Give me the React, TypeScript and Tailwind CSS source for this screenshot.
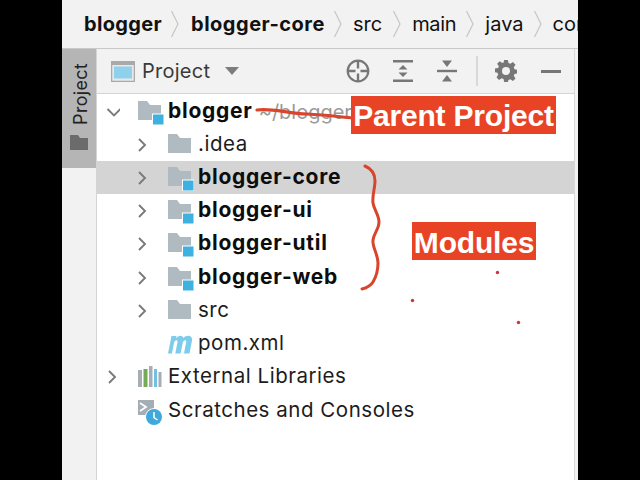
import React from "react";

const F = "font-['Inter','Liberation_Sans',sans-serif]";

function Folder({ module }: { module?: boolean }) {
  return (
    <svg width="26" height="26" viewBox="0 0 26 26" className="shrink-0">
      <path d="M0 2h9l3 4h11v15H0z" fill="#afbac1" />
      {module && <rect x="14" y="14.5" width="12" height="11.5" fill="#fff" />}
      {module && <rect x="15" y="15.5" width="10.500" height="10" fill="#3fb1e0" />}
    </svg>
  );
}

function Chevron({ open }: { open?: boolean }) {
  return (
    <svg width="16" height="16" viewBox="0 0 16 16" className="shrink-0">
      <path
        d={open ? "M3.500 5l6.500 6.500 6.500-6.500" : "M5 2l6 6-6 6"}
        fill="none"
        stroke="#777b7e"
        strokeWidth="1.9"
      />
    </svg>
  );
}

function Sep() {
  return (
    <svg width="10" height="28" viewBox="0 0 10 28" className="shrink-0">
      <path d="M1.5 1l6.5 13-6.5 13" fill="none" stroke="#c6c6c6" strokeWidth="1.2" />
    </svg>
  );
}

function Row({
  pad,
  arrow,
  icon,
  text,
  bold,
  selected,
  children,
  h = "h-[33px]",
}: {
  pad: string;
  arrow?: "open" | "closed";
  icon: React.ReactNode;
  text: string;
  bold?: boolean;
  selected?: boolean;
  children?: React.ReactNode;
  h?: string;
}) {
  return (
    <div className={`flex items-center ${h} ${pad} ${selected ? "bg-[#d4d4d4]" : ""}`}>
      <div className="w-[34px] shrink-0 flex overflow-visible">
        {arrow && <Chevron open={arrow === "open"} />}
      </div>
      <div className="w-[30px] shrink-0 flex">{icon}</div>
      <span
        className={`leading-none whitespace-nowrap ${
          bold
            ? "text-[21px] font-bold text-[#0d0d0d] tracking-[0.75px] -mt-[3px]"
            : "text-[20.5px] text-[#1c1c1c] tracking-[0.53px]"
        }`}
      >
        {text}
      </span>
      {children}
    </div>
  );
}

export default function App() {
  return (
    <div className={`w-[640px] h-[480px] bg-black flex justify-center overflow-hidden ${F}`}>
      <div className="w-[516px] h-[480px] relative flex flex-col bg-white overflow-hidden">
        {/* Breadcrumb */}
        <div className="h-[49px] shrink-0 bg-[#f2f2f2] border-b border-[#c8c8c8] flex items-center pl-[22px] text-[20px] text-[#111] whitespace-nowrap overflow-hidden">
          <span className="font-bold tracking-[0.35px]">blogger</span>
          <span className="ml-[8px] mr-[11px] flex"><Sep /></span>
          <span className="font-bold tracking-[0.5px]">blogger-core</span>
          <span className="ml-[8px] mr-[10px] flex"><Sep /></span>
          <span>src</span>
          <span className="ml-[10px] mr-[10px] flex"><Sep /></span>
          <span className="tracking-[-0.3px]">main</span>
          <span className="ml-[9px] mr-[10px] flex"><Sep /></span>
          <span>java</span>
          <span className="ml-[9px] mr-[10px] flex"><Sep /></span>
          <span>com</span>
        </div>

        <div className="flex-1 flex min-h-0">
          {/* Left strip */}
          <div className="w-[35px] shrink-0 bg-[#f2f2f2] border-r border-[#d4d4d4]">
            <div className="h-[119px] w-[34px] bg-[#b5b5b5] flex flex-col items-center justify-end pb-[18px] gap-[10px]">
              <span className="[writing-mode:vertical-rl] rotate-180 translate-x-[2px] text-[18px] leading-none text-[#222] tracking-[0.3px]">
                Project
              </span>
              <svg width="18" height="15" viewBox="0 0 18 15">
                <path d="M0 0h8l2 3h8v12H0z" fill="#6b6b6b" />
              </svg>
            </div>
          </div>

          {/* Main panel */}
          <div className="flex-1 flex flex-col min-w-0">
            <div className="h-[45px] shrink-0 bg-[#f2f2f2] border-b border-[#d4d4d4] flex items-center pl-[14px] relative">
              <svg width="24" height="21" viewBox="0 0 24 21" className="shrink-0">
                <rect x="0.5" y="0.5" width="23" height="20" fill="#e8e8e8" stroke="#a9a9a9" strokeWidth="1.5" />
                <rect x="0" y="0" width="24" height="4" fill="#a9a9a9" />
                <rect x="3" y="5.5" width="18" height="12" fill="#8fd0ec" />
              </svg>
              <span className="ml-[7px] text-[20px] text-[#3a3a3a] tracking-[0.25px]">Project</span>
              <svg width="14" height="8" viewBox="0 0 14 8" className="ml-[15px] shrink-0">
                <path d="M0 0h14l-7 8z" fill="#7d7d7d" />
              </svg>
              <div className="ml-auto flex items-center pr-[13px]">
                <svg width="24" height="24" viewBox="0 0 24 24" className="shrink-0">
                  <circle cx="12" cy="12" r="10.3" fill="none" stroke="#777" strokeWidth="2.2" />
                  <path d="M12 2v7.5M12 14.5V22M2 12h7.5M14.5 12H22" stroke="#777" strokeWidth="2.4" />
                </svg>
                <svg width="20" height="24" viewBox="0 0 20 24" className="ml-[23px] shrink-0">
                  <path d="M0 1h20v2.5H0zM0 20.5h20V23H0z" fill="#777" />
                  <path d="M10 6l4.5 4.5h-9zM10 18l-4.5-4.5h9z" fill="#777" />
                </svg>
                <svg width="20" height="24" viewBox="0 0 20 24" className="ml-[24px] shrink-0">
                  <path d="M0 10.8h20v2.4H0z" fill="#777" />
                  <path d="M5 1.500h10L10 8zM10 16l5 6.500H5z" fill="#777" />
                </svg>
                <div className="w-[2px] h-[30px] bg-[#d8d8d8] ml-[19px]" />
                <svg width="22" height="22" viewBox="0 0 24 24" className="ml-[17px] shrink-0">
                  <path
                    fill="#777"
                    fillRule="evenodd"
                    d="M10 0h4l.7 3.400 2 .8L19.600 2.300l2.800 2.800-1.900 2.900.8 2 3.400.700v3.900l-3.400.7-.8 2 1.900 2.900-2.800 2.800-2.900-1.900-2 .8L14 24h-4l-.7-3.400-2-.8-2.900 1.900-2.800-2.800 1.900-2.900-.8-2L0 13.300V9.400l3.400-.7.8-2L2.300 4.100 5.100 1.300 8 3.200l1.300-.5zM12 7.500a4.400 4.400 0 1 0 0 8.800 4.400 4.400 0 0 0 0-8.800z"
                  />
                </svg>
                <div className="w-[20px] h-[3px] bg-[#777] ml-[24px]" />
              </div>
            </div>

            <div className="flex-1 flex flex-col pt-[1px]">
              <Row pad="pl-[7px]" arrow="open" bold text="blogger" icon={<Folder module />}>
                <span className="ml-[6px] text-[20px] text-[#9a9a9a] whitespace-nowrap">~/blogger</span>
              </Row>
              <Row pad="pl-[37px]" arrow="closed" text=".idea" icon={<Folder />} />
              <Row pad="pl-[37px]" arrow="closed" bold selected text="blogger-core" icon={<Folder module />} />
              <Row pad="pl-[37px]" arrow="closed" bold text="blogger-ui" icon={<Folder module />} />
              <Row pad="pl-[37px]" arrow="closed" bold text="blogger-util" icon={<Folder module />} h="h-[34px]" />
              <Row pad="pl-[37px]" arrow="closed" bold text="blogger-web" icon={<Folder module />} />
              <Row pad="pl-[37px]" arrow="closed" text="src" icon={<Folder />} />
              <Row
                pad="pl-[37px]"
                text="pom.xml"
                icon={
                  <svg width="25" height="22" viewBox="0 0 25 22">
                    <path
                      d="M0 20.500L3.500 3h5l-.5 2.500C10 2.500 14 1.500 15.500 5 18 1.500 25 1.500 24 7.500l-2.500 13h-5.500l2.200-11.500c.4-2.400-2.200-2.400-3.400.5l-2.200 11h-5.300l2.200-11.500c.4-2.400-2.200-2.400-3.400.5l-2.200 11z"
                      fill="#7ccdec"
                    />
                  </svg>
                }
              />
              <Row
                pad="pl-[7px]"
                arrow="closed"
                text="External Libraries"
                icon={
                  <svg width="26" height="22" viewBox="0 0 26 22">
                    <rect x="0" y="4" width="4" height="17" fill="#a5aeb4" />
                    <rect x="5.500" y="3" width="4" height="18" fill="#74a957" />
                    <rect x="11" y="0" width="3.500" height="21" fill="#a5aeb4" />
                    <rect x="16" y="3" width="3" height="18" fill="#6fc0e5" />
                    <rect x="20.500" y="6" width="3" height="15" fill="#a5aeb4" />
                  </svg>
                }
              />
              <Row
                pad="pl-[7px]"
                text="Scratches and Consoles"
                h="h-[34px]"
                icon={
                  <svg width="26" height="26" viewBox="0 0 26 26" className="mt-[5px]">
                    <rect x="0" y="0" width="16" height="15" fill="#a5aeb4" />
                    <path d="M2 3l6 4-6 4" fill="none" stroke="#fff" strokeWidth="1.800" />
                    <circle cx="16" cy="17" r="9" fill="#fff" />
                    <circle cx="16" cy="17" r="8" fill="#3fa9dc" />
                    <path d="M16 12v5.500l3.500 2.500" fill="none" stroke="#fff" strokeWidth="1.500" />
                  </svg>
                }
              />
            </div>
          </div>

          <div className="w-[4px] shrink-0 bg-[#f2f2f2] border-l border-[#d8d8d8]" />
        </div>

        {/* Annotations */}
        <svg width="516" height="480" viewBox="0 0 516 480" className="absolute left-0 top-0 pointer-events-none">
          <path
            d="M195 110c14-2 30 3 50 4s34 3 46 4"
            fill="none"
            stroke="#d9442c"
            strokeWidth="3.200"
            strokeLinecap="round"
          />
          <path
            d="M303 166c7 3 10 8 10 15s-3 15-2 22 6 12 6 19-5 11-6 18 5 14 5 23-2 14-5 19-7 6-11 7"
            fill="none"
            stroke="#d9442c"
            strokeWidth="3"
            strokeLinecap="round"
          />
          <circle cx="435.500" cy="272.500" r="1.700" fill="#c8353a" />
          <circle cx="350.500" cy="300.500" r="1.700" fill="#c8353a" />
          <circle cx="456.500" cy="322.500" r="1.700" fill="#c8353a" />
        </svg>
        <div className="absolute left-[289px] top-[96px] w-[205px] h-[38px] bg-[#e94325] flex items-center justify-center pt-[2px] text-white font-bold text-[30px] leading-none tracking-[-0.2px] font-['Liberation_Sans',sans-serif] whitespace-nowrap">
          Parent Project
        </div>
        <div className="absolute left-[350px] top-[222px] w-[124px] h-[38px] bg-[#e94325] flex items-center justify-center pt-[3px] text-white font-bold text-[30px] leading-none tracking-[-0.2px] font-['Liberation_Sans',sans-serif] whitespace-nowrap">
          Modules
        </div>
      </div>
    </div>
  );
}
